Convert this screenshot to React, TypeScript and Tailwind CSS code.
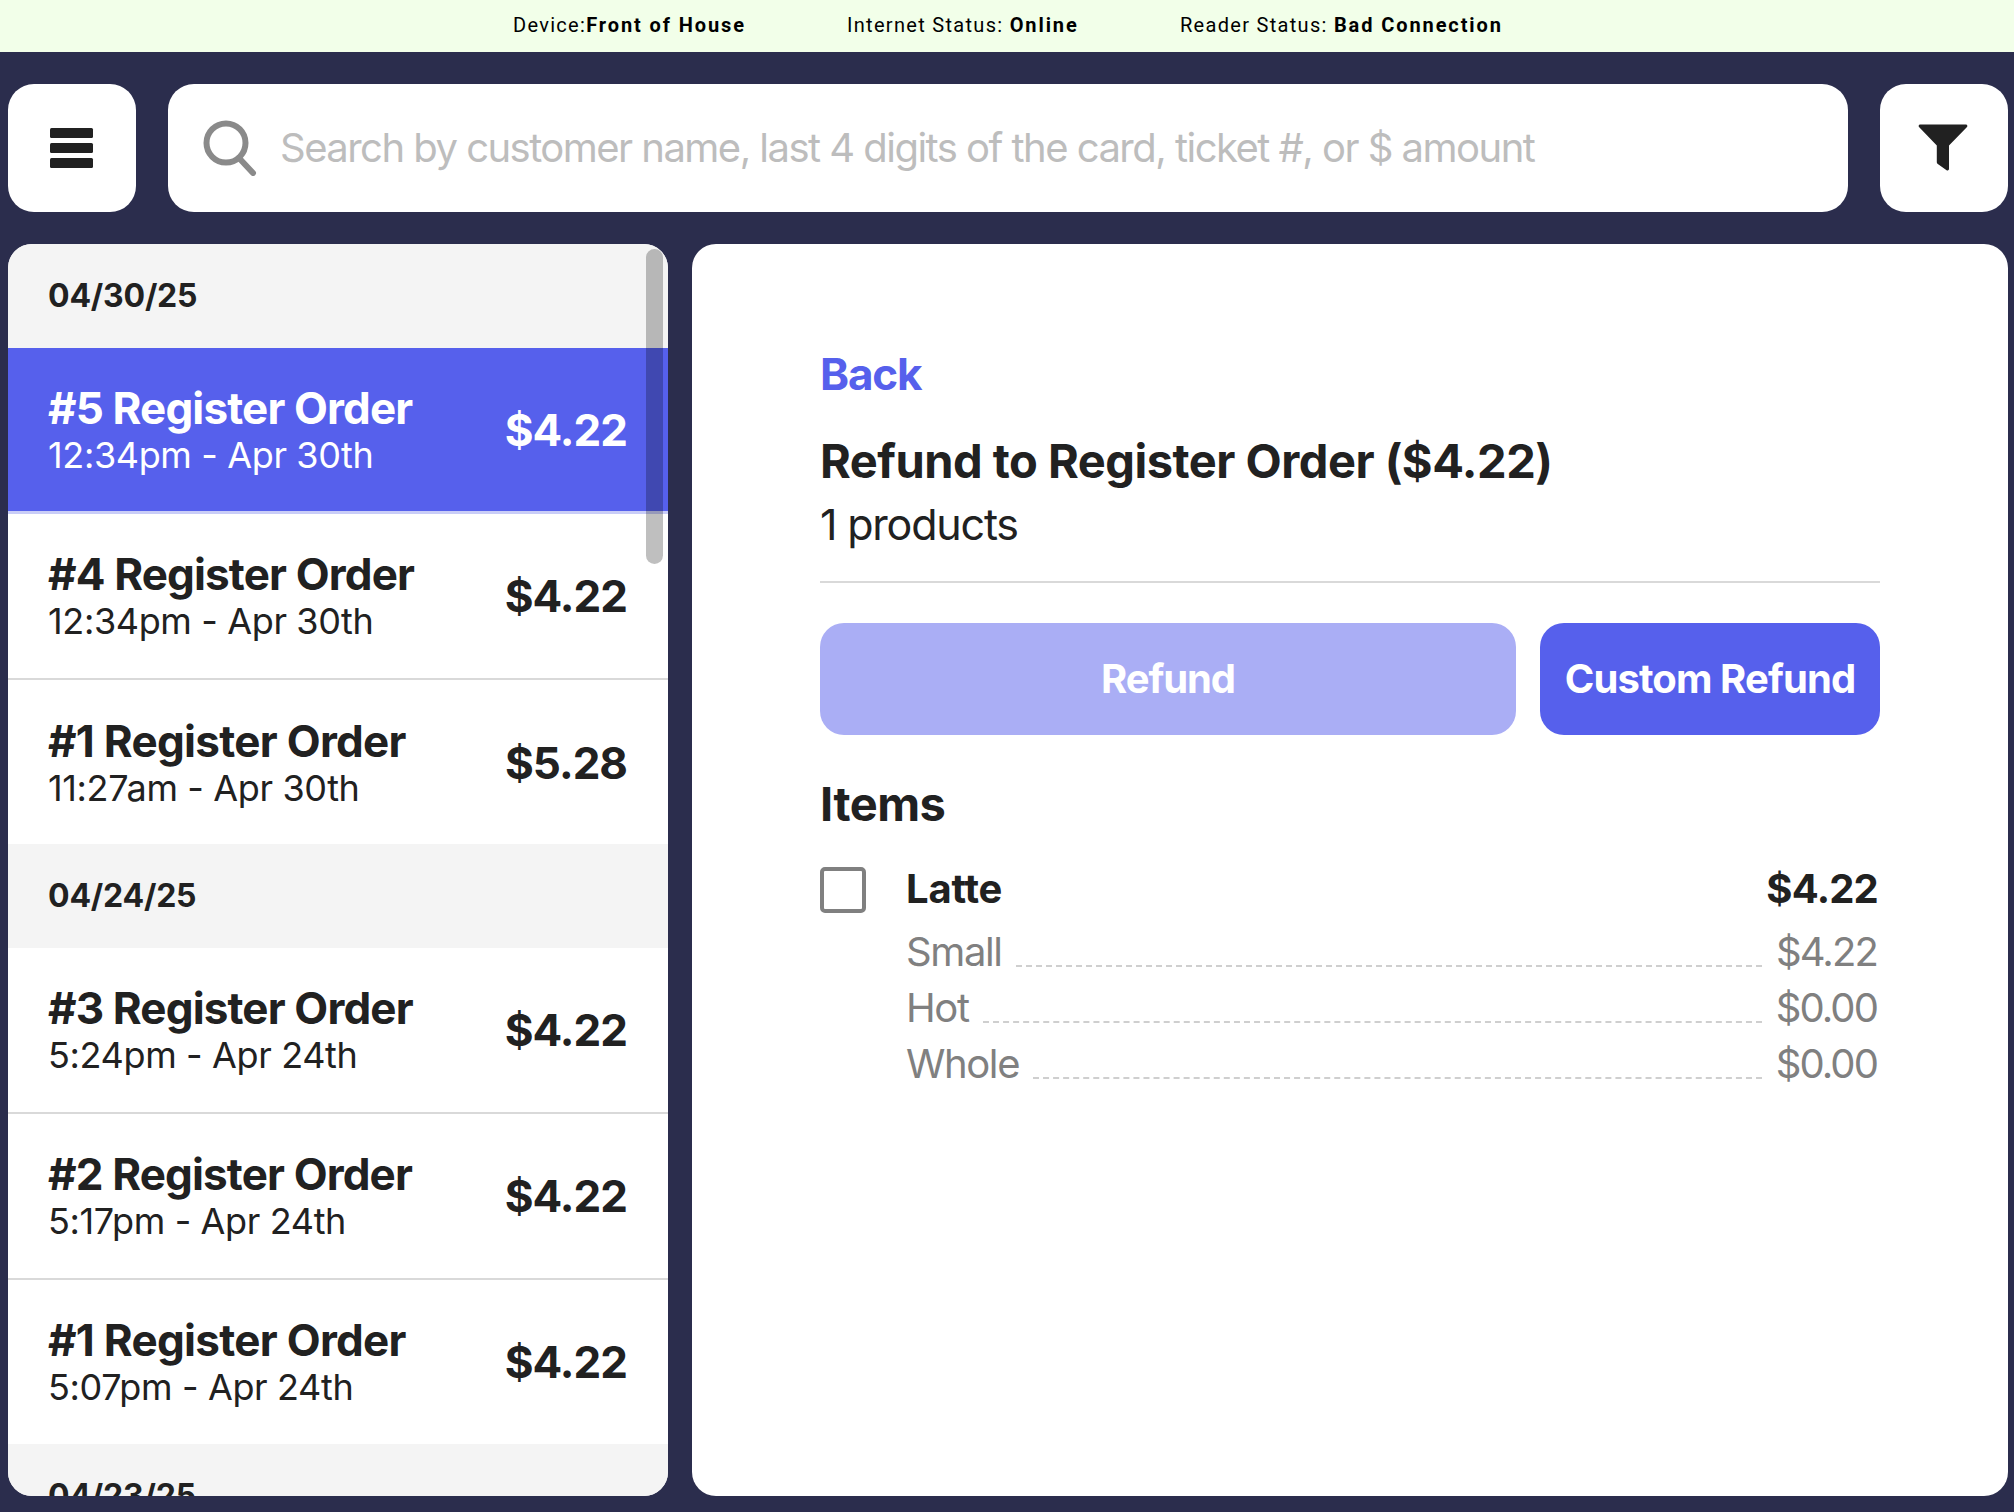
import React from "react";

type Order = { title: string; time: string; price: string; active?: boolean; last?: boolean; row: string; titleClass?: string };

const groups: { date: string; orders: Order[] }[] = [
  {
    date: "04/30/25",
    orders: [
      { title: "#5 Register Order", time: "12:34pm - Apr 30th", price: "$4.22", active: true, row: "h-[166px]" },
      { title: "#4 Register Order", time: "12:34pm - Apr 30th", price: "$4.22", row: "h-[166px] pb-[1px]" },
      { title: "#1 Register Order", time: "11:27am - Apr 30th", price: "$5.28", last: true, row: "h-[164px] pt-[1px]", titleClass: "tracking-[-0.7px]" },
    ],
  },
  {
    date: "04/24/25",
    orders: [
      { title: "#3 Register Order", time: "5:24pm - Apr 24th", price: "$4.22", row: "h-[166px]" },
      { title: "#2 Register Order", time: "5:17pm - Apr 24th", price: "$4.22", row: "h-[166px]" },
      { title: "#1 Register Order", time: "5:07pm - Apr 24th", price: "$4.22", last: true, row: "h-[164px]", titleClass: "tracking-[-0.7px]" },
    ],
  },
  { date: "04/23/25", orders: [] },
];

function Row({ o }: { o: Order }) {
  return (
    <div
      className={
        "shrink-0 flex items-center justify-between pl-[40px] pr-[41px] " +
        o.row +
        " " +
        (o.active ? "bg-[#5660ec] text-white border-b-[3px] border-[#c9cdf7] " : "bg-white text-[#212121] ") +
        (!o.active && !o.last ? "border-b-2 border-[#d9d9d9]" : "")
      }
    >
      <div className="flex flex-col">
        <div className={"text-[44px] leading-[50px] font-bold " + (o.titleClass ?? "tracking-[-0.85px]")}>{o.title}</div>
        <div className="text-[36px] leading-[44px] font-normal tracking-[-0.36px]">{o.time}</div>
      </div>
      <div className="text-[44px] leading-[50px] font-bold tracking-[-1px]">{o.price}</div>
    </div>
  );
}

function Option({ name, price }: { name: string; price: string }) {
  return (
    <div className="flex items-end h-[56px] text-[40px] leading-[56px] text-[#808080]">
      <span className="tracking-[-1.4px]">{name}</span>
      <span className="flex-1 mx-[14px] mb-[13px] border-b-2 border-dashed border-[#cfcfcf]" />
      <span className="tracking-[-1.9px] mr-[1px]">{price}</span>
    </div>
  );
}

export default function App() {
  return (
    <div className="w-[2014px] h-[1512px] overflow-hidden bg-[#2b2d4d] flex flex-col font-['Inter','Noto_Sans',sans-serif]">
      <div className="h-[52px] shrink-0 bg-[#f2ffe9] flex items-center pb-[2px] text-[20px] tracking-[1.3px] text-black font-['Roboto',sans-serif] pl-[513px]">
        <span className="w-[334px]">
          Device:<b className="font-bold tracking-[1.9px]">Front of House</b>
        </span>
        <span className="w-[333px]">
          Internet Status: <b className="font-bold tracking-[1.9px]">Online</b>
        </span>
        <span>
          Reader Status: <b className="font-bold tracking-[1.9px]">Bad Connection</b>
        </span>
      </div>

      <div className="flex gap-[32px] pl-[8px] pr-[6px] pt-[32px] shrink-0">
        <div className="w-[128px] h-[128px] rounded-[26px] bg-white flex items-center justify-center">
          <svg width="44" height="40" viewBox="0 0 44 40" fill="#212121">
            <rect x="0" y="0" width="43" height="10" rx="1.5" />
            <rect x="0" y="15" width="43" height="10" rx="1.5" />
            <rect x="0" y="30" width="43" height="10" rx="1.5" />
          </svg>
        </div>
        <div className="flex-1 h-[128px] rounded-[26px] bg-white flex items-center pl-[35px]">
          <svg width="56" height="56" viewBox="0 0 56 56" fill="none" stroke="#8a8a8a" className="shrink-0">
            <circle cx="23" cy="23" r="19.5" strokeWidth="6" />
            <path d="M36 38 L50 53" strokeWidth="6" strokeLinecap="round" />
          </svg>
          <span className="ml-[21px] text-[40px] text-[#bdbdbd] tracking-[-1.53px]">
            Search by customer name, last 4 digits of the card, ticket #, or $ amount
          </span>
        </div>
        <div className="w-[128px] h-[128px] rounded-[26px] bg-white flex items-center justify-center pr-[2px] pb-[1px]">
          <svg width="50" height="50" viewBox="0 0 50 50" fill="#212121">
            <path d="M2 1.5 H48 a1.5 1.5 0 0 1 1 2.5 L31 22.5 V46 a1.5 1.5 0 0 1 -2.4 1.2 L19.8 41 a2 2 0 0 1 -1 -1.7 V22.5 L1 4 a1.5 1.5 0 0 1 1 -2.5 Z" />
          </svg>
        </div>
      </div>

      <div className="flex gap-[24px] pl-[8px] pr-[6px] pt-[32px] h-[1284px] shrink-0">
        <div className="relative w-[660px] rounded-[24px] overflow-hidden flex flex-col bg-white">
          {groups.map((g) => (
            <React.Fragment key={g.date}>
              <div className="h-[104px] shrink-0 bg-[#f4f4f4] flex items-center pl-[40px] text-[32px] font-bold text-[#212121] tracking-[-0.2px]">
                {g.date}
              </div>
              {g.orders.map((o, i) => (
                <Row key={i} o={o} />
              ))}
            </React.Fragment>
          ))}
          <div className="absolute top-[5px] right-[5px] w-[17px] h-[315px] rounded-full bg-black/25" />
        </div>

        <div className="flex-1 rounded-[24px] bg-white pl-[128px] pr-[128px] pt-[102px] flex flex-col">
          <div className="text-[44px] leading-[56px] font-bold text-[#5660ec] tracking-[-1.2px]">Back</div>
          <div className="mt-[31px] text-[47px] leading-[56px] font-bold text-[#212121] tracking-[-0.5px]">
            Refund to Register Order ($4.22)
          </div>
          <div className="mt-[7px] text-[43px] leading-[56px] text-[#212121] tracking-[-1.2px]">1 products</div>
          <div className="mt-[29px] h-[2px] bg-[#d9d9d9]" />
          <div className="mt-[40px] flex gap-[24px]">
            <div className="flex-1 h-[112px] rounded-[24px] bg-[#aaaef5] flex items-center justify-center text-white text-[40px] font-bold tracking-[-1.1px]">
              Refund
            </div>
            <div className="w-[340px] h-[112px] rounded-[24px] bg-[#5660ec] flex items-center justify-center text-white text-[40px] font-bold tracking-[-0.9px]">
              Custom Refund
            </div>
          </div>
          <div className="mt-[41px] text-[47px] leading-[56px] font-bold text-[#212121] tracking-[-0.5px]">Items</div>
          <div className="mt-[35px] flex">
            <div className="w-[46px] h-[46px] shrink-0 rounded-[5px] border-[4px] border-[#808080]" />
            <div className="ml-[40px] flex-1 pr-[2px]">
              <div className="flex justify-between text-[40px] leading-[44px] font-bold text-[#212121]">
                <span className="tracking-[-0.2px]">Latte</span>
                <span className="tracking-[-0.8px]">$4.22</span>
              </div>
              <div className="mt-[13px]">
                <Option name="Small" price="$4.22" />
                <Option name="Hot" price="$0.00" />
                <Option name="Whole" price="$0.00" />
              </div>
            </div>
          </div>
        </div>
      </div>
    </div>
  );
}
